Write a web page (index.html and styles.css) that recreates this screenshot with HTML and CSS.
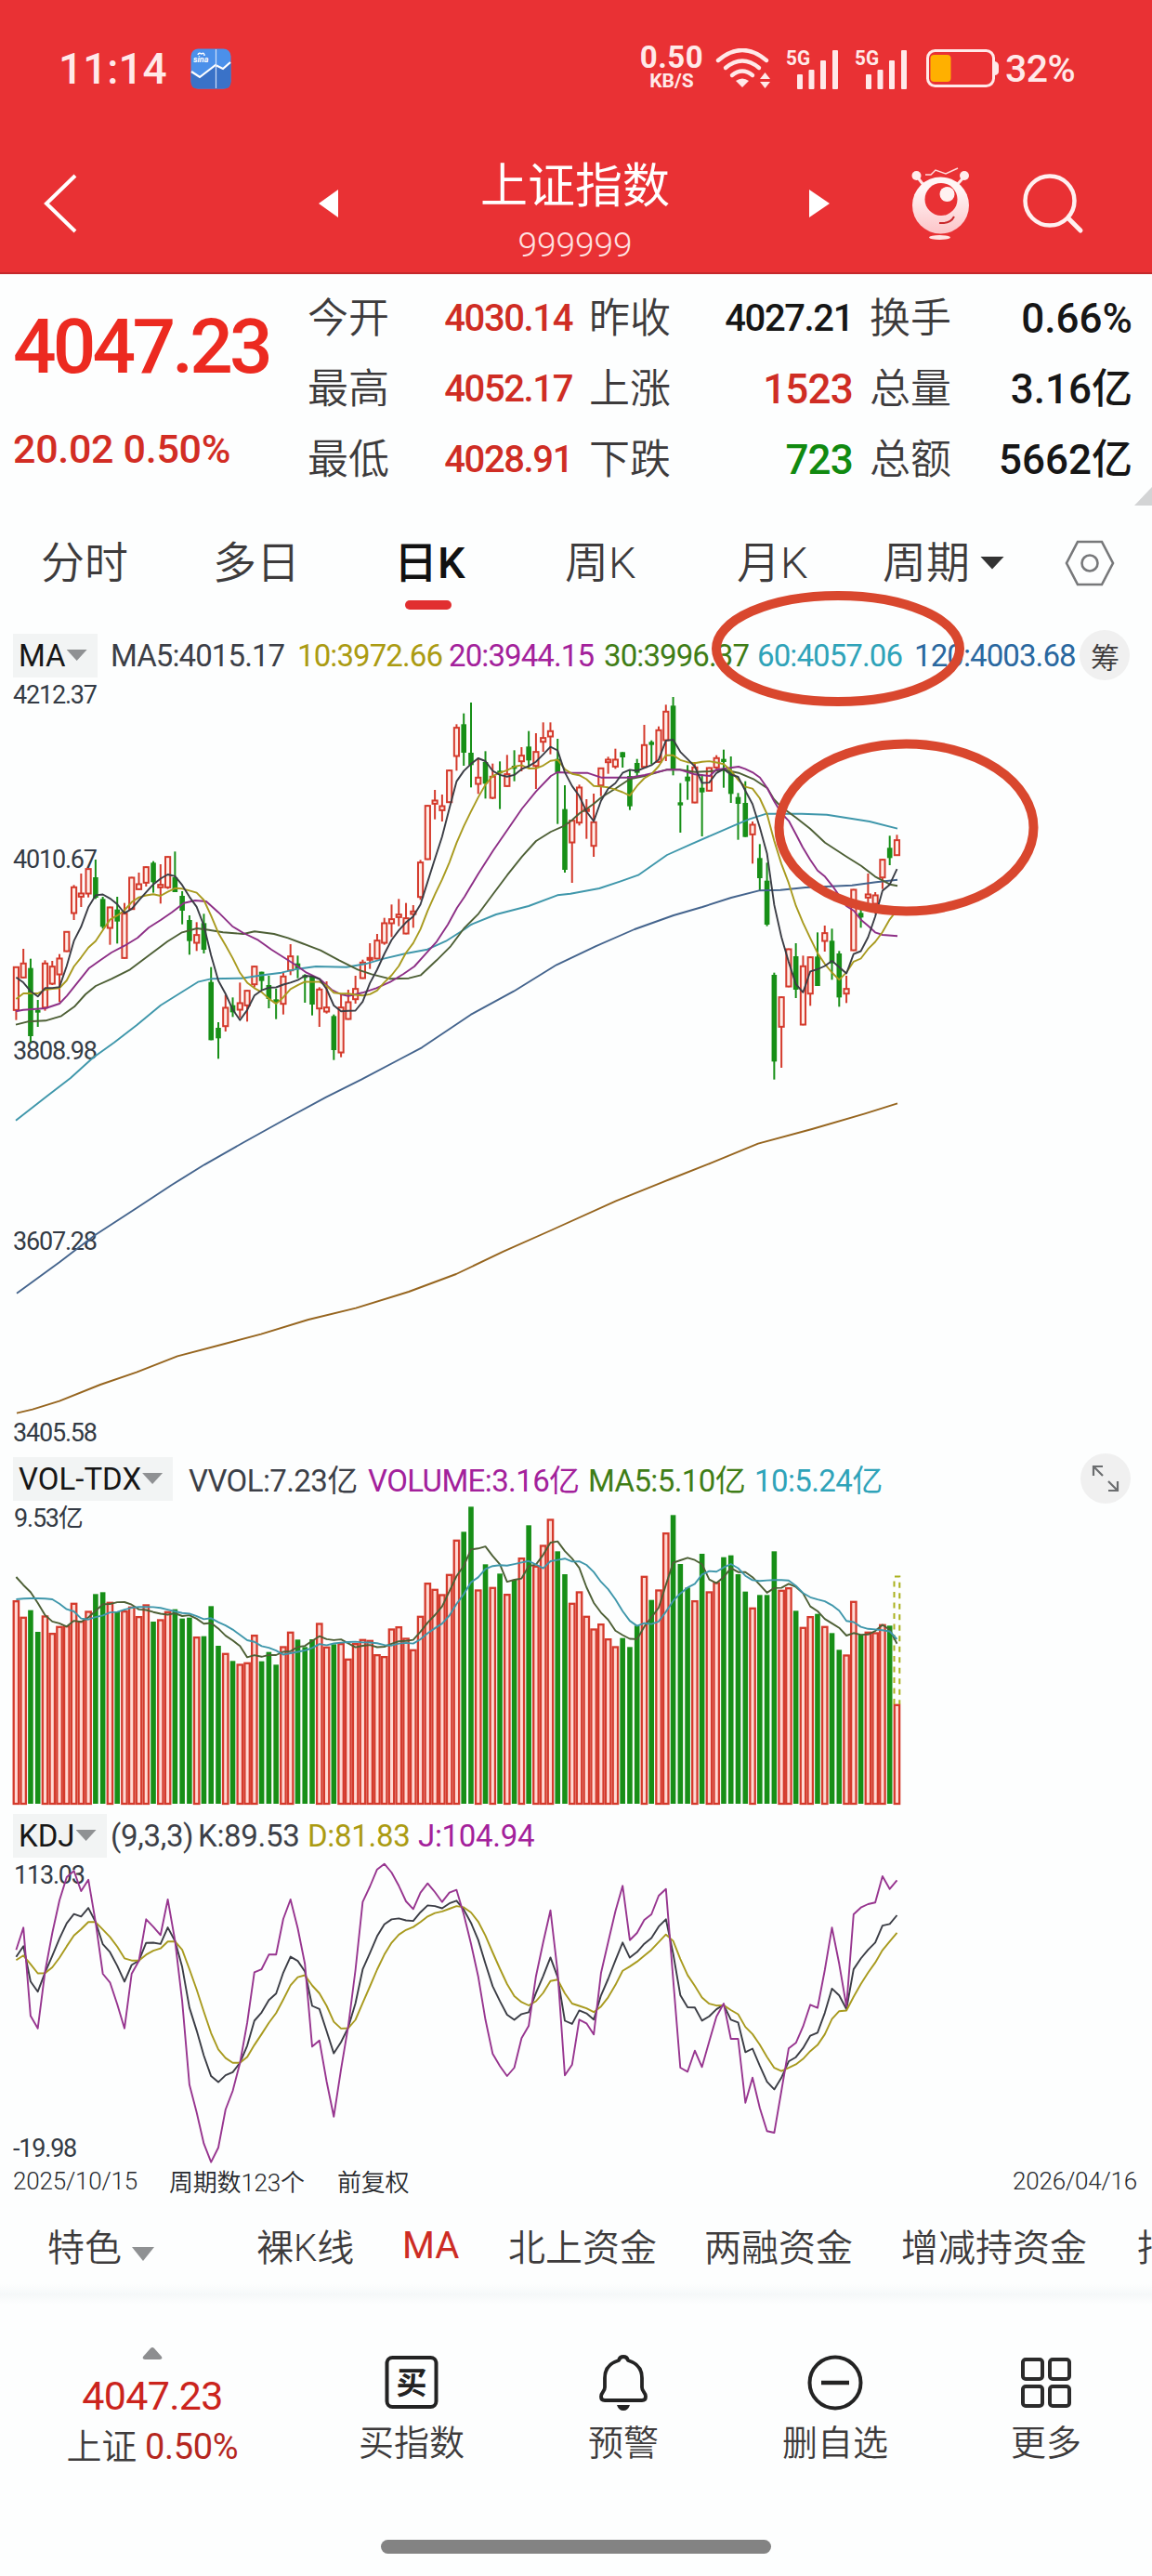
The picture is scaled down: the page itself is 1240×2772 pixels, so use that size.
FILE: index.html
```html
<!DOCTYPE html>
<html lang="zh-CN">
<head>
    <meta charset="UTF-8">
    <meta name="viewport" content="width=device-width, initial-scale=1.0">
    <title>上证指数</title>
    <link rel="stylesheet" href="styles.css">
</head>
<body>

    <header class="header">
        <div class="status-bar">
            <span class="clock">11:14</span>
            <svg class="app-icon" width="44" height="44" viewBox="0 0 44 44">
                <rect x="0.5" y="0.5" width="43" height="43" rx="8" fill="#4b90ea"/>
                <path d="M0.5 24 L10 31 L27 18 L35 22 L43.500 15 V36 Q43.500 43.500 36 43.500 H8 Q0.500 43.500 0.500 36 Z" fill="#3a72c8"/>
                <path d="M1 25 L10 31 L27 18 L35 22 L43 15" fill="none" stroke="#fff" stroke-width="2.200"/>
                <path d="M27.500 1 V43" stroke="#cfe0fa" stroke-width="1.200"/>
                <text x="3" y="15" font-size="9" font-style="italic" font-weight="700" fill="#fff">sina</text>
                <path d="M8 7 Q9 4 12 6 Q15 4 15 8" fill="none" stroke="#fff" stroke-width="1.500"/>
            </svg>
            <div class="net"><b>0.50</b><span>KB/S</span></div>
            <svg width="60" height="44" viewBox="0 0 60 44" fill="none" stroke="#ffe9e9" stroke-width="4.400" stroke-linecap="round">
                <path d="M3 13 Q29 -9 55 13"/>
                <path d="M11 21 Q29 6 47 21"/>
                <path d="M18 29 Q29 20 40 29"/>
                <path d="M22 35 Q29 30 36 35 L29 42 Z" fill="#ffe9e9" stroke="none"/>
                <path d="M48 33 L53.500 26 L59 33 Z M48 36 L53.500 43 L59 36 Z" fill="#ffe9e9" stroke="none"/>
            </svg>
            <svg class="signal" width="58" height="56" viewBox="0 -6 58 56" fill="#ffe9e9">
                <text x="0" y="17" font-size="22" font-weight="700" textLength="26" lengthAdjust="spacingAndGlyphs">5G</text>
                <rect x="12" y="27" width="6" height="16" rx="1"/>
                <rect x="24.500" y="22" width="6" height="21" rx="1"/>
                <rect x="37" y="12" width="6" height="31" rx="1"/>
                <rect x="50" y="1" width="6" height="42" rx="1"/>
            </svg>
            <svg class="signal" width="58" height="56" viewBox="0 -6 58 56" fill="#ffe9e9">
                <text x="0" y="17" font-size="22" font-weight="700" textLength="26" lengthAdjust="spacingAndGlyphs">5G</text>
                <rect x="12" y="27" width="6" height="16" rx="1"/>
                <rect x="24.500" y="22" width="6" height="21" rx="1"/>
                <rect x="37" y="12" width="6" height="31" rx="1"/>
                <rect x="50" y="1" width="6" height="42" rx="1"/>
            </svg>
            <svg width="80" height="42" viewBox="0 0 80 42">
                <rect x="1.500" y="1.500" width="71" height="38" rx="8" fill="none" stroke="#ffe9e9" stroke-width="3"/>
                <rect x="4.500" y="6" width="22" height="29" rx="4" fill="#ffb000"/>
                <path d="M74 13 Q78 14 78 18 V24 Q78 27 74 28 Z" fill="#ffe9e9"/>
            </svg>
            <span class="percent">32%</span>
        </div>
        <nav class="nav-bar">
            <svg width="36" height="66" viewBox="0 0 36 66"><path d="M34 3 L3 33 L34 63" fill="none" stroke="#fff" stroke-width="4"/></svg>
            <svg width="22" height="30" viewBox="0 0 22 30"><path d="M0 15 L21 0 V30 Z" fill="#fff"/></svg>
            <div class="nav-title">
                <h1>上证指数</h1>
                <p>999999</p>
            </div>
            <svg width="22" height="30" viewBox="0 0 22 30"><path d="M22 15 L0 0 V30 Z" fill="#fff"/></svg>
            <svg width="66" height="80" viewBox="0 0 66 80">
                <defs>
                    <linearGradient id="face" x1="0" y1="0" x2="0" y2="1">
                        <stop offset="0.200" stop-color="#fff6f6"/>
                        <stop offset="1" stop-color="#fcc4c8"/>
                    </linearGradient>
                </defs>
                <path d="M7 11 L14 20 M58 11 L50 20" stroke="#ffe9e9" stroke-width="3"/>
                <circle cx="6.500" cy="10" r="5" fill="#ffeded"/>
                <circle cx="58" cy="10" r="5" fill="#ffeded"/>
                <path d="M16 9 L22 9 L27 4 L38 8 L51 2" fill="none" stroke="#ffdcdc" stroke-width="1.500"/>
                <circle cx="32.500" cy="42" r="30.500" fill="url(#face)"/>
                <circle cx="33" cy="35.500" r="17.500" fill="#e93134"/>
                <circle cx="39.500" cy="30" r="8" fill="#fff1f1"/>
                <path d="M31 61 Q43 62 47 54" fill="none" stroke="#c9282c" stroke-width="2"/>
                <ellipse cx="31.500" cy="76.500" rx="11.500" ry="2.500" fill="#ffe3e3"/>
            </svg>
            <svg width="70" height="70" viewBox="0 0 70 70" fill="none" stroke="#fff0f0" stroke-linecap="round">
                <circle cx="31" cy="32" r="26.500" stroke-width="4.500"/>
                <path d="M51 51 L64 64" stroke-width="5"/>
            </svg>
        </nav>
    </header>

    <section class="quote">
        <div class="quote-main">
            <div class="price">4047.23</div>
            <div class="change">20.02 0.50%</div>
        </div>
        <dl class="quote-col">
            <dt>今开</dt><dd class="up">4030.14</dd>
            <dt>最高</dt><dd class="up">4052.17</dd>
            <dt>最低</dt><dd class="up">4028.91</dd>
        </dl>
        <dl class="quote-col">
            <dt>昨收</dt><dd>4027.21</dd>
            <dt>上涨</dt><dd class="up large">1523</dd>
            <dt>下跌</dt><dd class="down large">723</dd>
        </dl>
        <dl class="quote-col">
            <dt>换手</dt><dd class="wide">0.66%</dd>
            <dt>总量</dt><dd class="wide">3.16亿</dd>
            <dt>总额</dt><dd class="wide">5662亿</dd>
        </dl>
        <svg class="corner" width="19" height="20" viewBox="0 0 19 20"><path d="M19 0 V20 H0 Z" fill="#d3d4d5"/></svg>
    </section>

    <nav class="period-tabs">
        <span>分时</span>
        <span>多日</span>
        <span class="active">日K</span>
        <span>周K</span>
        <span>月K</span>
        <span>周期<i class="caret"></i></span>
        <svg width="54" height="50" viewBox="0 0 54 50" fill="none" stroke="#77787a" stroke-width="2.600">
            <path d="M14 2 H40 L52 25 L40 48 H14 L2 25 Z"/>
            <circle cx="27" cy="25" r="8.500"/>
        </svg>
    </nav>

    <section class="chart-block">
        <div class="legend legend-ma">
            <span class="chip">MA<i class="caret"></i></span>
            <span class="dark">MA5:4015.17</span>
            <span class="olive">10:3972.66</span>
            <span class="purple">20:3944.15</span>
            <span class="green">30:3996.37</span>
            <span class="cyan">60:4057.06</span>
            <span class="blue">120:4003.68</span>
            <span class="round">筹</span>
        </div>
        <svg id="kline" class="chart" width="1240" height="834" viewBox="0 730 1240 834"></svg>

        <div class="legend legend-vol">
            <span class="chip">VOL-TDX<i class="caret"></i></span>
            <span class="dark">VVOL:7.23亿</span>
            <span class="purple">VOLUME:3.16亿</span>
            <span class="green">MA5:5.10亿</span>
            <span class="cyan">10:5.24亿</span>
            <span class="round">
                <svg width="30" height="30" viewBox="0 0 30 30" fill="none" stroke="#6b6d6f" stroke-width="2.200">
                    <path d="M2 12 V2 H12 M2 2 L12 12 M28 18 V28 H18 M28 28 L18 18"/>
                </svg>
            </span>
        </div>
        <svg id="volume" class="chart" width="1240" height="333" viewBox="0 1616 1240 333"></svg>

        <div class="legend legend-kdj">
            <span class="chip">KDJ<i class="caret"></i></span>
            <span class="dark">(9,3,3)</span>
            <span class="dark">K:89.53</span>
            <span class="olive">D:81.83</span>
            <span class="purple">J:104.94</span>
        </div>
        <svg id="kdj" class="chart" width="1240" height="327" viewBox="0 2001 1240 327"></svg>

        <div class="dates">
            <span>2025/10/15</span>
            <span>周期数123个</span>
            <span>前复权</span>
            <span class="date-end">2026/04/16</span>
        </div>

        <!-- hand drawn marks round the MA60 value and the last candles -->
        <svg class="marks" width="380" height="370" viewBox="750 630 380 370" fill="none" stroke="#d9472e" stroke-width="10">
            <ellipse cx="902" cy="698" rx="131" ry="57"/>
            <ellipse cx="975.500" cy="890.500" rx="137" ry="90"/>
        </svg>
    </section>

    <nav class="feature-tabs">
        <span>特色<i class="caret"></i></span>
        <span>裸K线</span>
        <span class="active">MA</span>
        <span>北上资金</span>
        <span>两融资金</span>
        <span>增减持资金</span>
        <span>指标</span>
    </nav>
    <div class="divider"></div>

    <footer class="bottom-nav">
        <div class="index-item">
            <svg width="22" height="13" viewBox="0 0 22 13"><path d="M9 1 Q11 -1 13 1 L21 10 Q22 13 19 13 H3 Q0 13 1 10 Z" fill="#8d8e90"/></svg>
            <b>4047.23</b>
            <p>上证 <em>0.50%</em></p>
        </div>
        <div class="item">
            <svg width="60" height="60" viewBox="0 0 60 60">
                <rect x="3.500" y="3" width="53" height="53" rx="6" fill="none" stroke="#232323" stroke-width="4"/>
                <text x="30" y="42" font-size="33" font-weight="700" text-anchor="middle" fill="#232323">买</text>
            </svg>
            <span>买指数</span>
        </div>
        <div class="item">
            <svg width="60" height="60" viewBox="0 0 60 60" fill="none" stroke="#232323" stroke-width="3.800" stroke-linejoin="round">
                <path d="M30 2 Q34 2 35 6 C45 9 50 16 50 25 V35 C50 40 54 40 54 45 Q54 49 50 49 H10 Q6 49 6 45 C6 40 10 40 10 35 V25 C10 16 15 9 25 6 Q26 2 30 2 Z"/>
                <path d="M23 54 H37 Q35 60 30 60 Q25 60 23 54 Z" fill="#232323" stroke="none"/>
            </svg>
            <span>预警</span>
        </div>
        <div class="item">
            <svg width="60" height="60" viewBox="0 0 60 60" fill="none" stroke="#232323" stroke-width="4">
                <circle cx="30" cy="30" r="27.500"/>
                <path d="M15 30 H45" stroke-width="4.500"/>
            </svg>
            <span>删自选</span>
        </div>
        <div class="item">
            <svg width="60" height="60" viewBox="0 0 60 60" fill="none" stroke="#2b2b2b" stroke-width="4">
                <rect x="5" y="5" width="21" height="21" rx="3"/>
                <rect x="34" y="5" width="21" height="21" rx="3"/>
                <rect x="5" y="34" width="21" height="21" rx="3"/>
                <rect x="34" y="34" width="21" height="21" rx="3"/>
            </svg>
            <span>更多</span>
        </div>
    </footer>
    <div class="home-bar"></div>

    <script src="chart.js"></script>
</body>
</html>
```
FILE: styles.css
```css
* {
    margin: 0;
    padding: 0;
    box-sizing: border-box;
}

body {
    width: 1240px;
    height: 2772px;
    overflow: hidden;
    background: #fdfefe;
    color: #3d3b3c;
    font-family: Roboto, "Noto Sans CJK SC", sans-serif;
    font-weight: 400;
}

svg {
    display: block;
}

/* header */
.header {
    height: 295px;
    background: #e93134;
    border-bottom: 2px solid #c4282b;
    color: #fff;
}

.status-bar {
    display: grid;
    grid-template-columns: 142px 482px 83px 76px 74px 77px 85px auto;
    align-items: center;
    height: 148px;
    padding-left: 63px;
    color: #ffe9e9;
}

.clock {
    font-size: 46px;
    font-weight: 500;
}

.net {
    width: 72px;
    text-align: center;
}

.net b {
    display: block;
    font-size: 33px;
    font-weight: 700;
    line-height: 26px;
    letter-spacing: 0.5px;
}

.net span {
    display: block;
    font-size: 21px;
    font-weight: 700;
    line-height: 24px;
}

.signal {
    margin-top: 1px;
}

.percent {
    font-size: 41px;
    font-weight: 500;
    letter-spacing: -0.5px;
}

.nav-bar {
    display: grid;
    grid-template-columns: 296px 96px 432px 109px 119px auto;
    align-items: center;
    height: 136px;
    padding-left: 47px;
}

.nav-title {
    align-self: start;
    width: 360px;
    padding-top: 15px;
    text-align: center;
}

.nav-title h1 {
    font-size: 51px;
    font-weight: 400;
    line-height: 76px;
}

.nav-title p {
    font-size: 37px;
    font-weight: 300;
    line-height: 50px;
    color: #ffe2e2;
}

/* quote */
.quote {
    position: relative;
    display: grid;
    grid-template-columns: 299px 285px 284px 283px;
    column-gap: 18px;
    padding: 10px 0 0 14px;
    height: 238px;
}

.price {
    font-size: 82px;
    font-weight: 500;
    line-height: 136px;
    letter-spacing: -3.8px;
    color: #ec2a20;
}

.change {
    font-size: 43px;
    font-weight: 500;
    line-height: 84px;
    letter-spacing: -0.3px;
    color: #d22d24;
}

.quote-col {
    display: grid;
    grid-template-columns: 92px 1fr;
    grid-auto-rows: 76px;
    align-items: center;
}

.quote-col dt {
    font-size: 44px;
    font-weight: 350;
    line-height: 76px;
}

.quote-col dd {
    font-size: 40px;
    font-weight: 500;
    letter-spacing: -1.4px;
    line-height: 76px;
    text-align: right;
    color: #161616;
}

.quote-col .wide {
    font-size: 44px;
    letter-spacing: 0;
}

.quote-col .large {
    font-size: 44px;
    letter-spacing: -0.8px;
}

.quote-col .up {
    color: #cf2d24;
}

.quote-col .down {
    color: #118a10;
}

.corner {
    position: absolute;
    right: 0;
    bottom: -11px;
}

/* tabs over the chart */
.period-tabs {
    display: grid;
    grid-template-columns: 185px 198px 181px 185px 157px 196px auto;
    align-items: center;
    height: 145px;
    padding-left: 44px;
    font-size: 47px;
    font-weight: 350;
}

.period-tabs span {
    position: relative;
    display: flex;
    align-items: center;
    line-height: 145px;
}

.period-tabs .active {
    left: -3px;
    font-weight: 500;
    color: #111;
}

.period-tabs .active::after {
    content: "";
    position: absolute;
    left: 12px;
    bottom: 22px;
    width: 50px;
    height: 10px;
    border-radius: 5px;
    background: #e12f30;
}

.caret {
    display: inline-block;
    width: 22px;
    height: 12px;
    margin-left: 1px;
    background: #8f9193;
    clip-path: polygon(0 0, 100% 0, 50% 100%);
}

.period-tabs .caret {
    width: 26px;
    height: 14px;
    margin-left: 11px;
    background: #333;
}

/* charts */
.chart-block {
    position: relative;
}

.chart text {
    font-size: 27px;
    letter-spacing: -1.2px;
    fill: #333a44;
}

.legend {
    display: grid;
    align-items: center;
    height: 52px;
    padding-left: 14px;
    font-size: 33px;
    letter-spacing: -0.9px;
    white-space: nowrap;
}

.legend-ma {
    grid-template-columns: 105px 201px 163px 167px 165px 169px 178px auto;
}

.legend-vol {
    grid-template-columns: 189px 193px 237px 179px 351px auto;
    letter-spacing: -0.6px;
}

.legend-kdj {
    grid-template-columns: 105px 94px 118px 119px auto;
    letter-spacing: -0.3px;
}

.chip {
    display: flex;
    align-items: center;
    justify-self: start;
    height: 47px;
    padding: 0 11px 0 6px;
    background: #f2f4f4;
    color: #161616;
    letter-spacing: 0;
}

.round {
    display: flex;
    align-items: center;
    justify-content: center;
    width: 54px;
    height: 54px;
    border-radius: 50%;
    background: #f0f0f0;
    font-size: 31px;
    font-weight: 350;
}

.dark { color: #3c3f47; }
.olive { color: #ab9b12; }
.purple { color: #a3219b; }
.green { color: #3f7d16; }
.cyan { color: #2fa3b9; }
.blue { color: #2a68a0; }

.marks {
    position: absolute;
    left: 750px;
    top: -48px;
}

.dates {
    display: grid;
    grid-template-columns: 168px 181px 727px auto;
    align-items: center;
    height: 36px;
    padding-left: 14px;
    font-size: 26px;
    font-weight: 350;
    letter-spacing: -0.2px;
    color: #26282c;
}

.feature-tabs {
    display: grid;
    grid-template-columns: 225px 157px 114px 211px 212px 254px auto;
    align-items: center;
    height: 94px;
    padding: 10px 0 0 51px;
    font-size: 40px;
    font-weight: 350;
    white-space: nowrap;
    overflow: hidden;
}

.feature-tabs .active {
    font-weight: 400;
    color: #cd2c24;
}

.feature-tabs .caret {
    width: 24px;
    height: 15px;
    margin-left: 11px;
}

.divider {
    height: 22px;
    background: linear-gradient(#fdfefe, #f5f8f9, #fdfefe);
}

/* bottom navigation */
.bottom-nav {
    display: grid;
    grid-template-columns: 328px 230px 226px 230px 224px;
    height: 253px;
    padding-top: 46px;
    font-size: 38px;
    font-weight: 350;
}

.index-item,
.item {
    display: flex;
    flex-direction: column;
    align-items: center;
}

.index-item b {
    margin-top: 16px;
    font-size: 43px;
    font-weight: 400;
    line-height: 46px;
    letter-spacing: -0.7px;
    color: #cb241d;
}

.index-item p {
    line-height: 64px;
    letter-spacing: -0.3px;
}

.index-item em {
    font-style: normal;
    font-weight: 400;
    color: #b5271f;
}

.item {
    padding-top: 8px;
}

.item span {
    margin-top: 10px;
    line-height: 50px;
}

.home-bar {
    width: 420px;
    height: 15px;
    margin: 0 auto;
    border-radius: 8px;
    background: #838383;
}
```
FILE: chart.js
```js
const NS = "http://www.w3.org/2000/svg";
const RED = "#d43a2c";
const GREEN = "#178f17";
const FIRST_X = 17.4;
const STEP = 7.771;

const kline = document.getElementById("kline");
const volume = document.getElementById("volume");
const kdj = document.getElementById("kdj");

// [up, body top, body bottom, high, low]
const candles = [
    [1,960,1103,960,1133],[1,948,998,903,998],[0,965,1185,935,1205],[0,1100,1108,1068,1155],[1,948,1095,940,1103],
    [1,958,1018,942,1020],[1,932,988,920,1075],[1,846,913,846,913],[1,702,790,697,810],[1,722,737,660,768],
    [1,643,727,643,737],[0,672,738,615,742],[0,742,832,735,838],[1,767,838,767,890],[0,776,815,735,886],
    [1,787,935,755,935],[1,671,777,671,777],[1,692,713,657,713],[1,637,692,637,702],[0,625,688,620,722],
    [1,694,707,630,757],[1,604,707,604,710],[0,672,720,589,720],[0,732,780,717,824],[0,810,878,795,922],
    [1,856,886,817,910],[0,820,906,790,918],[0,1010,1198,962,1198],[0,1158,1192,1140,1258],[1,1091,1155,1052,1170],
    [0,1085,1108,1060,1123],[1,1076,1102,1012,1125],[1,1036,1088,1036,1138],[1,958,1020,958,1028],[0,977,1007,977,1035],
    [0,1020,1065,990,1095],[0,1066,1072,1032,1130],[1,990,1083,980,1115],[1,925,975,888,988],[0,950,968,925,998],
    [0,988,995,985,1077],[0,990,1083,990,1118],[1,1032,1098,1027,1155],[1,1090,1108,1008,1112],[0,1120,1230,1115,1262],
    [1,1090,1240,1050,1253],[1,1073,1132,1035,1132],[1,1030,1068,990,1080],[1,945,1000,938,1000],[1,930,940,885,968],
    [1,874,937,855,937],[1,818,886,803,890],[1,805,823,760,865],[1,790,803,742,830],[1,802,856,755,856],
    [1,780,793,762,835],[1,622,738,616,745],[1,439,616,439,616],[1,422,437,390,485],[1,440,458,405,492],
    [1,325,432,325,432],[1,187,283,178,328],[0,178,270,143,312],[0,270,310,108,382],[1,348,373,285,403],
    [0,300,370,265,418],[1,345,418,305,420],[0,328,335,298,452],[1,337,380,277,380],[0,312,322,262,362],
    [1,277,300,252,330],[0,250,295,200,318],[1,265,315,207,387],[1,220,237,172,267],[1,198,220,172,275],
    [0,290,335,225,500],[0,452,648,375,657],[1,487,562,487,690],[1,380,498,373,505],[1,450,455,420,548],
    [1,492,573,402,606],[1,318,378,318,410],[1,290,303,283,338],[1,290,317,257,322],[0,268,285,268,318],
    [0,345,443,325,455],[0,303,335,290,350],[1,243,318,180,318],[0,235,245,230,307],[1,195,302,185,302],
    [1,135,232,115,297],[0,118,322,90,343],[0,430,440,368,528],[0,347,362,310,422],[1,315,433,300,433],
    [0,383,398,340,540],[1,317,395,317,395],[1,285,320,278,330],[0,290,300,260,383],[0,330,403,282,432],
    [0,413,435,400,551],[0,432,542,362,542],[1,500,536,492,628],[0,610,675,565,715],[0,683,825,625,830],
    [0,987,1267,980,1325],[1,1057,1157,1057,1287],[1,902,1027,902,1027],[0,927,1035,885,1062],[1,957,1150,925,1150],
    [1,928,1050,928,1087],[0,928,1023,850,1023],[1,850,880,828,912],[0,877,950,838,1003],[0,918,1060,910,1090],
    [1,1030,1050,990,1078],[1,710,910,710,910],[0,787,802,760,835],[1,725,740,660,755],[1,728,760,720,790],
    [1,613,675,613,710],[0,577,610,538,633],[1,550,603,535,603]
];

const volumes = [
    487,540,518,588,536,592,570,568,495,553,521,466,460,492,522,520,507,538,500,555,548,522,515,545,542,604,602,505,633,657,
    682,692,687,598,683,653,694,635,588,613,637,612,560,636,628,625,675,625,612,615,661,667,578,571,608,645,537,430,450,467,
    402,291,265,184,452,370,444,400,466,420,349,244,375,308,224,328,402,495,458,537,578,562,610,635,608,637,568,408,485,452,
    268,211,369,445,487,336,458,428,347,341,402,458,510,469,469,328,453,445,520,573,538,530,570,592,646,662,489,597,588,590,
    564,568,822
];

const jValues = [
    475,403,688,728,545,420,315,240,220,285,248,385,552,580,650,728,552,510,376,400,427,312,445,640,910,1000,1100,1160,1113,
    990,930,840,710,547,537,490,490,375,312,405,520,787,767,900,1013,860,720,540,320,270,215,197,225,268,318,343,290,260,288,
    320,290,281,360,455,560,700,810,850,882,855,760,720,560,450,347,545,880,845,700,712,748,550,450,350,268,443,420,378,360,
    300,278,570,855,868,800,853,770,690,648,762,762,968,887,985,1060,1065,930,793,775,722,652,662,540,403,520,657,360,338,
    327,322,237,278,250
];

const ma20 = [[17,1105],[25,1100],[49,1095],[64,1080],[72,1055],[84,1010],[96,965],[108,940],[120,915],[134,893],[148,868],[160,835],[173,810],[185,785],[198,755],[210,747],[222,750],[235,785],[250,830],[262,852],[278,875],[292,905],[305,930],[318,955],[330,980],[344,1000],[357,1035],[367,1050],[375,1055],[390,1045],[405,1030],[420,1010],[434,985],[446,960],[458,920],[470,880],[482,825],[492,770],[500,735],[507,700],[515,660],[531,585],[546,520],[562,450],[577,395],[593,345],[600,333],[616,335],[632,335],[647,350],[663,350],[678,350],[694,342],[718,325],[732,325],[748,340],[764,345],[771,325],[795,315],[802,322],[811,335],[818,350],[826,385],[833,425],[841,465],[849,490],[857,535],[864,575],[872,615],[880,650],[888,670],[896,700],[903,730],[911,765],[919,780],[927,810],[935,830],[942,850],[950,858],[966,862]];
const ma30 = [[17,1148],[30,1138],[49,1135],[66,1120],[80,1090],[92,1050],[103,1023],[120,1000],[140,970],[160,925],[180,880],[196,850],[212,837],[225,842],[240,850],[262,855],[274,847],[295,855],[310,868],[325,885],[345,908],[365,940],[385,970],[400,985],[420,1000],[440,998],[453,988],[470,940],[485,895],[500,835],[515,790],[531,725],[546,665],[562,605],[577,555],[593,525],[608,505],[616,487],[624,465],[632,450],[639,435],[647,415],[663,385],[678,355],[694,345],[717,325],[732,325],[748,332],[764,330],[779,325],[795,335],[811,355],[826,385],[833,420],[841,445],[857,480],[872,515],[888,560],[911,605],[927,635],[942,670],[958,695],[966,700]];
const ma60 = [[17,1457],[50,1380],[76,1320],[100,1255],[123,1205],[147,1150],[173,1085],[197,1040],[213,1010],[227,1000],[260,998],[283,988],[303,980],[320,968],[340,960],[373,962],[393,952],[413,935],[437,918],[460,905],[480,878],[500,840],[507,825],[534,792],[569,765],[600,730],[614,725],[645,708],[668,685],[687,665],[718,600],[744,565],[767,535],[790,505],[806,485],[825,467],[863,467],[890,470],[917,483],[936,492],[966,515]];
const ma120 = [[18,2015],[64,1915],[102,1828],[147,1740],[185,1665],[220,1600],[261,1530],[306,1455],[351,1382],[389,1325],[430,1260],[454,1222],[507,1115],[553,1040],[599,955],[641,895],[683,840],[725,795],[756,768],[787,738],[817,715],[840,713],[867,705],[917,698],[943,688],[966,680]];
const ma250 = [[18,2402],[35,2390],[64,2363],[108,2310],[147,2270],[191,2218],[242,2178],[281,2147],[332,2100],[383,2063],[440,2010],[491,1953],[542,1880],[593,1812],[663,1717],[721,1647],[765,1595],[816,1532],[874,1485],[931,1435],[966,1402]];

function add(parent, tag, attrs, text) {
    const el = document.createElementNS(NS, tag);
    for (const key in attrs) el.setAttribute(key, attrs[key]);
    if (text) el.textContent = text;
    parent.appendChild(el);
    return el;
}

// values are stored in thirds of a pixel, measured down from the top of each pane
function toY(base, v) {
    return base + v / 3;
}

function xAt(i) {
    return FIRST_X + i * STEP;
}

function line(parent, points, color, base) {
    add(parent, "polyline", {
        points: points.map(p => p[0].toFixed(1) + "," + toY(base, p[1]).toFixed(1)).join(" "),
        fill: "none",
        stroke: color,
        "stroke-width": 1.9,
        "stroke-linejoin": "round"
    });
}

// moving average, with the values of the first days given
function average(values, n, seed) {
    return values.map((v, i) => {
        if (i < seed.length) return [xAt(i), seed[i]];
        const part = values.slice(i - n + 1, i + 1);
        return [xAt(i), part.reduce((a, b) => a + b, 0) / n];
    });
}

function label(parent, x, y, text) {
    add(parent, "text", { x: x, y: y }, text);
}

// candles
label(kline, 14, 757, "4212.37");
label(kline, 14, 934, "4010.67");
label(kline, 14, 1140, "3808.98");
label(kline, 14, 1345, "3607.28");
label(kline, 14, 1551, "3405.58");

candles.forEach(([up, top, bottom, high, low], i) => {
    const x = xAt(i);
    const y = toY(720, top);
    const h = Math.max((bottom - top) / 3, 3);
    const color = up ? RED : GREEN;
    add(kline, "line", { x1: x, x2: x, y1: toY(720, high), y2: toY(720, low), stroke: color, "stroke-width": 2 });
    if (up) {
        add(kline, "rect", { x: x - 2.6, y: y + 0.8, width: 5.2, height: Math.max(h - 1.6, 2), fill: "#ffeee8", stroke: RED, "stroke-width": 2 });
    } else {
        add(kline, "rect", { x: x - 2.8, y: y, width: 5.6, height: h, fill: GREEN });
    }
});

const closes = candles.map(c => c[0] ? c[1] : c[2]);
line(kline, ma250, "#96651f", 720);
line(kline, ma120, "#44648d", 720);
line(kline, ma60, "#3f97ab", 720);
line(kline, ma30, "#4d5f35", 720);
line(kline, ma20, "#8d2f86", 720);
line(kline, average(closes, 10, [1065,1047,1047,1047,1035,1032,1030,1005,960]), "#a89a1e", 720);
line(kline, average(closes, 5, [995,1012,1040,1057]), "#3b3d45", 720);

// volume, coloured by the candle of the same day
label(volume, 15, 1643, "9.53亿");
volumes.forEach((v, i) => {
    const x = xAt(i);
    const y = toY(1560, v);
    if (candles[i][0]) {
        add(volume, "rect", { x: x - 2.7, y: y + 0.8, width: 5.4, height: 1941 - y - 0.8, fill: "#ffd9d3", stroke: RED, "stroke-width": 2.3 });
    } else {
        add(volume, "rect", { x: x - 2.8, y: y, width: 5.6, height: 1941 - y, fill: GREEN });
    }
});
// expected volume of the running day
add(volume, "path", { d: "M962.500 1834 V1696.500 H968.300 V1834", fill: "none", stroke: "#a9b01c", "stroke-width": 2, "stroke-dasharray": "6 5.500" });
line(volume, average(volumes, 5, [411,437,460,495]), "#4d5f35", 1560);
line(volume, average(volumes, 10, [483,481,480,480,481,483,497,515,522]), "#3f97ab", 1560);

// KDJ: J = 3K - 2D and D follows K by a third each day
label(kdj, 15, 2027, "113.03");
label(kdj, 14, 2321, "-19.98");
const kLine = [];
const dLine = [];
let d = 508;
jValues.forEach((j, i) => {
    if (i > 0) d = (6 * d + j) / 7;
    dLine.push([xAt(i), d]);
    kLine.push([xAt(i), (j + 2 * d) / 3]);
});
line(kdj, kLine, "#3b3d45", 1940);
line(kdj, dLine, "#a89a1e", 1940);
line(kdj, jValues.map((j, i) => [xAt(i), j]), "#97358f", 1940);
```
